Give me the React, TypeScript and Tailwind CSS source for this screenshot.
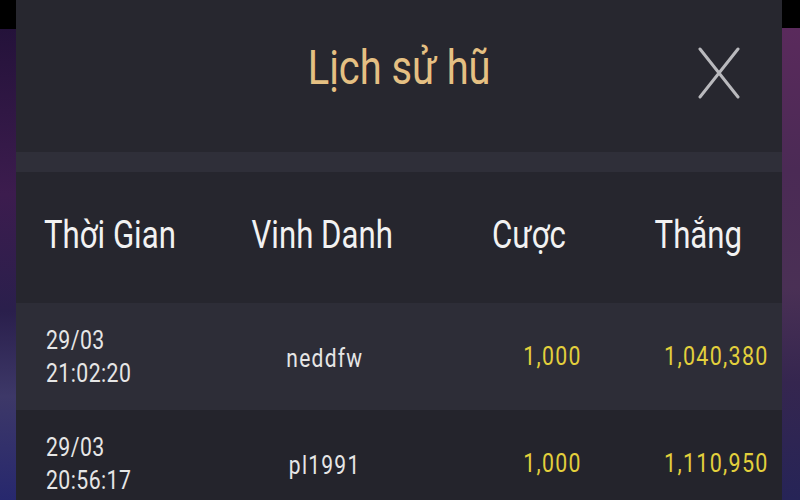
import React from "react";

type Row = { date: string; time: string; name: string; bet: string; win: string };

const rows: Row[] = [
  { date: "29/03", time: "21:02:20", name: "neddfw", bet: "1,000", win: "1,040,380" },
  { date: "29/03", time: "20:56:17", name: "pl1991", bet: "1,000", win: "1,110,950" },
];

const font = { fontFamily: "Roboto, 'Noto Sans', sans-serif" };

function CloseIcon(): React.ReactElement {
  return (
    <svg width="42" height="52" viewBox="0 0 42 52" fill="none">
      <path d="M2 2 L40 50 M40 2 L2 50" stroke="#b9b9bd" strokeWidth="3" strokeLinecap="round" />
    </svg>
  );
}

export default function App(): React.ReactElement {
  return (
    <div className="flex h-[500px] w-[800px] overflow-hidden bg-black" style={font}>
      <div className="flex w-[16px] flex-col">
        <div className="h-[29px] bg-black" />
        <div className="flex-1 bg-[linear-gradient(180deg,#24123a_0%,#3c1c4e_35%,#2a1f4c_60%,#3d3868_78%,#27286e_100%)]" />
      </div>

      <div className="flex w-[766px] flex-col">
        <div className="relative flex h-[152px] shrink-0 items-center justify-center bg-[#27272f] pb-[16px]">
          <span className="inline-block origin-center scale-x-[0.83] text-[48px] leading-none text-[#e5c083]">
            Lịch sử hũ
          </span>
          <div className="absolute left-[682px] top-[47px]">
            <CloseIcon />
          </div>
        </div>
        <div className="h-[20px] shrink-0 bg-[#2f2f39]" />

        <div className="grid h-[131px] shrink-0 grid-cols-[206px_200px_218px_142px] items-center bg-[#26262e] pb-[6px] text-[38px] leading-none text-[#f2f2f2]">
          <div className="pl-[28px]">
            <span className="inline-block origin-left scale-x-[0.82]">Thời Gian</span>
          </div>
          <div className="text-center">
            <span className="inline-block origin-center scale-x-[0.82]">Vinh Danh</span>
          </div>
          <div className="pr-[4px] text-center">
            <span className="inline-block origin-center scale-x-[0.82]">Cược</span>
          </div>
          <div className="pr-[26px] text-center">
            <span className="inline-block origin-center scale-x-[0.82]">Thắng</span>
          </div>
        </div>

        {rows.map((row, i) => (
          <div
            key={row.time}
            className={`grid h-[107px] shrink-0 grid-cols-[206px_200px_218px_142px] items-center text-[25px] tracking-[1.5px] ${
              i % 2 === 0 ? "bg-[#2d2d37]" : "bg-[#24242c]"
            }`}
          >
            <div className="flex flex-col pl-[30px] leading-[33px] tracking-[0.5px] text-[#e6e6e6]">
              <span className="inline-block origin-left scale-x-[0.85]">{row.date}</span>
              <span className="inline-block origin-left scale-x-[0.85]">{row.time}</span>
            </div>
            <div className="pl-[6px] pt-[4px] text-center text-[#e6e6e6]">
              <span className="inline-block origin-center scale-x-[0.84]">{row.name}</span>
            </div>
            <div className="pr-[58px] text-right text-[#e3d03c]">
              <span className="inline-block origin-right scale-x-[0.85]">{row.bet}</span>
            </div>
            <div className="pr-[13px] text-right text-[#e3d03c]">
              <span className="inline-block origin-right scale-x-[0.86]">{row.win}</span>
            </div>
          </div>
        ))}
      </div>

      <div className="flex w-[18px] flex-col">
        <div className="h-[28px] bg-black" />
        <div className="flex-1 bg-[linear-gradient(180deg,#5a2a5c_0%,#4b2a55_30%,#4a3055_55%,#35264f_75%,#262457_100%)]" />
      </div>
    </div>
  );
}
